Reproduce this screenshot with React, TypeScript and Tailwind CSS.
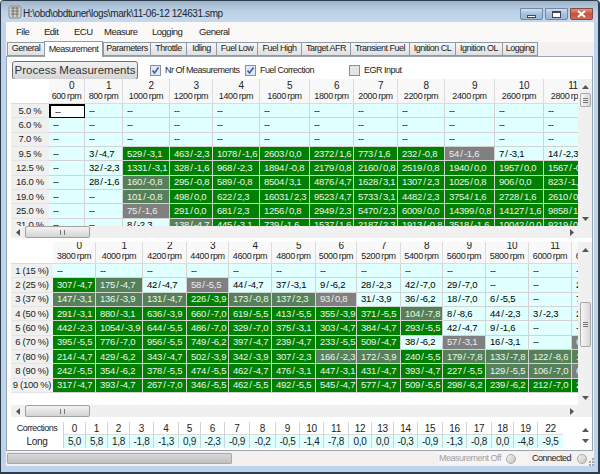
import React from "react";

const font = "font-['Liberation_Sans',Arial,sans-serif]";
const small = "text-[9px] tracking-[-0.5px]";
const cellText = "text-[9.5px] tracking-[-0.3px] [word-spacing:-1px]";

const tabs: [string, number][] = [
  ["General", 37],
  ["Measurement", 59],
  ["Parameters", 47],
  ["Throttle", 36],
  ["Idling", 30],
  ["Fuel Low", 41],
  ["Fuel High", 44],
  ["Target AFR", 49],
  ["Transient Fuel", 59],
  ["Ignition CL", 46],
  ["Ignition OL", 47],
  ["Logging", 36],
];

const topRpm = [600, 800, 1000, 1200, 1400, 1600, 1800, 2000, 2200, 2400, 2600, 2800];
const bottomRpm = [3800, 4000, 4200, 4400, 4600, 4800, 5000, 5200, 5400, 5600, 5800, 6000, 6200];

// kinds: l = light, d = dark green, m = grey green, g = grey
type Row = { label: string; kinds: string; cells: string[] };

const dash = (n: number) => Array(n).fill("--");

const topRows: Row[] = [
  { label: "5.0 %", kinds: "llllllllllll", cells: dash(12) },
  { label: "6.0 %", kinds: "llllllllllll", cells: dash(12) },
  { label: "7.0 %", kinds: "llllllllllll", cells: dash(12) },
  { label: "9.5 %", kinds: "lldddddddgll", cells: ["--", "3 / -4,7", "529 / -3,1", "463 / -2,3", "1078 / -1,6", "2603 / 0,0", "2372 / 1,6", "773 / 1,6", "232 / -0,8", "54 / -1,6", "7 / -3,1", "14 / -2,3"] },
  { label: "12.5 %", kinds: "lldddddddddd", cells: ["--", "32 / -2,3", "1331 / -3,1", "328 / -1,6", "968 / -2,3", "1894 / -0,8", "2179 / 0,8", "2160 / 0,8", "2519 / 0,8", "1940 / 0,0", "1957 / 0,0", "1567 / -0,8"] },
  { label: "16.0 %", kinds: "llmddddddddd", cells: ["--", "28 / -1,6", "160 / -0,8", "295 / -0,8", "589 / -0,8", "8504 / 3,1", "4876 / 4,7", "1628 / 3,1", "1307 / 2,3", "1025 / 0,8", "906 / 0,0", "823 / -1,6"] },
  { label: "19.0 %", kinds: "llmddddddddd", cells: ["--", "--", "101 / -0,8", "498 / 0,0", "622 / 2,3", "16031 / 2,3", "9523 / 4,7", "5733 / 3,1", "4482 / 2,3", "3754 / 1,6", "2728 / 1,6", "2610 / 0,8"] },
  { label: "25.0 %", kinds: "llgddddddddd", cells: ["--", "--", "75 / -1,6", "291 / 0,0", "681 / 2,3", "1256 / 0,8", "2949 / 2,3", "5470 / 2,3", "6009 / 0,0", "14399 / 0,8", "14127 / 1,6", "9858 / 1,6"] },
  { label: "31.0 %", kinds: "lllmdddddddd", cells: ["--", "--", "8 / -2,3", "138 / -4,7", "445 / -3,1", "739 / -1,6", "1537 / 1,6", "2187 / 2,3", "1913 / -0,8", "3518 / -1,6", "10042 / 0,0", "9219 / 0,0"] },
];

const bottomRows: Row[] = [
  { label: "1 (15 %)", kinds: "lllllllllllll", cells: dash(13) },
  { label: "2 (25 %)", kinds: "dmlglllllllll", cells: ["307 / -4,7", "175 / -4,7", "42 / -4,7", "58 / -5,5", "44 / -4,7", "37 / -3,1", "9 / -6,2", "28 / -2,3", "42 / -7,0", "29 / -7,0", "--", "--", "2"] },
  { label: "3 (37 %)", kinds: "mmmdmmgllllll", cells: ["147 / -3,1", "136 / -3,9", "131 / -4,7", "226 / -3,9", "173 / -0,8", "137 / 2,3", "93 / 0,8", "31 / -3,9", "36 / -6,2", "18 / -7,0", "6 / -5,5", "--", "7"] },
  { label: "4 (50 %)", kinds: "ddddddddmllll", cells: ["291 / -3,1", "880 / -3,1", "636 / -3,9", "660 / -7,0", "619 / -5,5", "413 / -5,5", "355 / -3,9", "371 / -5,5", "104 / -7,8", "8 / -8,6", "44 / -2,3", "3 / -2,3", "2"] },
  { label: "5 (60 %)", kinds: "dddddddddllll", cells: ["442 / -2,3", "1054 / -3,9", "644 / -5,5", "486 / -7,0", "329 / -7,0", "375 / -3,1", "303 / -4,7", "384 / -4,7", "293 / -5,5", "42 / -4,7", "9 / -1,6", "--", "-"] },
  { label: "6 (70 %)", kinds: "ddddddddlgllg", cells: ["395 / -5,5", "776 / -7,0", "956 / -5,5", "749 / -6,2", "397 / -4,7", "239 / -4,7", "233 / -5,5", "509 / -4,7", "38 / -6,2", "57 / -3,1", "16 / -3,1", "--", "6"] },
  { label: "7 (80 %)", kinds: "ddddddmmdmmmm", cells: ["214 / -4,7", "429 / -6,2", "343 / -4,7", "502 / -3,9", "342 / -3,9", "307 / -2,3", "166 / -2,3", "172 / -3,9", "240 / -5,5", "179 / -7,8", "133 / -7,8", "122 / -8,6", "1"] },
  { label: "8 (90 %)", kinds: "ddddddddddmmg", cells: ["242 / -5,5", "354 / -6,2", "378 / -5,5", "474 / -5,5", "462 / -4,7", "476 / -3,1", "447 / -3,1", "431 / -4,7", "393 / -4,7", "227 / -5,5", "129 / -5,5", "106 / -7,0", "6"] },
  { label: "9 (100 %)", kinds: "ddddddddddddd", cells: ["317 / -4,7", "393 / -4,7", "267 / -7,0", "346 / -5,5", "462 / -5,5", "492 / -5,5", "545 / -4,7", "577 / -4,7", "509 / -5,5", "298 / -6,2", "239 / -6,2", "212 / -7,0", "2"] },
];

const corrections: [string, string, number][] = [
  ["0", "5,0", 22], ["1", "5,8", 22], ["2", "1,8", 22], ["3", "-1,8", 24], ["4", "-1,3", 25],
  ["5", "0,9", 22], ["6", "-2,3", 24], ["7", "-0,9", 25], ["8", "-0,2", 26], ["9", "-0,5", 24],
  ["10", "-1,4", 24], ["11", "-7,8", 25], ["12", "0,0", 23], ["13", "0,0", 22], ["14", "-0,3", 24],
  ["15", "-0,9", 25], ["16", "-1,3", 24], ["17", "-0,8", 25], ["18", "0,0", 22], ["19", "-4,8", 24], ["22", "-9,5", 26],
];

const cellStyle: Record<string, string> = {
  l: "bg-[#e0ffff] text-black",
  d: "bg-[#008000] text-[#eef6ee]",
  m: "bg-[#55805a] text-[#eef6ee]",
  g: "bg-[#808080] text-[#eeeeee]",
};

function Grid({ rows, rpm, columns }: { rows: Row[]; rpm: number[]; columns: string }) {
  return (
    <div className={`grid auto-rows-[14.33px] ${columns}`}>
      <div className="border-b border-[#dcdcdc] bg-white" />
      {rpm.map((r, i) => (
        <div key={r} className="flex flex-col items-center justify-end overflow-hidden whitespace-nowrap border-r border-b border-[#dcdcdc] bg-[#f8f8f8] text-[9px] leading-[11px] tracking-[-0.4px] text-[#222]">
          <span className="pl-[10px] text-[10px]">{i}</span>
          <span className="pb-[1px] [word-spacing:-0.5px]">{r} rpm</span>
        </div>
      ))}
      {rows.map((row, ri) => (
        <React.Fragment key={row.label}>
          <div className="flex items-center justify-center overflow-hidden whitespace-nowrap border-b border-[#e4e4e4] bg-[#f0f0f0] text-[9.5px] tracking-[-0.3px] text-[#222]">{row.label}</div>
          {row.cells.map((c, ci) => (
            <div
              key={ci}
              className={`flex items-center overflow-hidden whitespace-nowrap border-r border-b border-[#d3d3d3] pl-[4px] ${cellText} ${cellStyle[row.kinds[ci]]} ${ri === 0 && ci === 0 && rpm[0] === 600 ? "border-2 border-black !bg-white" : ""}`}
            >
              {c}
            </div>
          ))}
        </React.Fragment>
      ))}
    </div>
  );
}

function Arrow({ dir }: { dir: "up" | "down" | "left" | "right" }) {
  const points = { up: "0,4 3.5,0 7,4", down: "0,0 3.5,4 7,0", left: "4,0 0,3.5 4,7", right: "0,0 4,3.5 0,7" }[dir];
  const box = dir === "up" || dir === "down" ? "0 0 7 4" : "0 0 4 7";
  const size = dir === "up" || dir === "down" ? "w-[7px] h-[4px]" : "w-[4px] h-[7px]";
  return (
    <svg viewBox={box} className={`${size} shrink-0`}>
      <polygon points={points} fill="#555" />
    </svg>
  );
}

function HScroll() {
  return (
    <div className="flex h-[12px] w-[567px] items-center bg-[#f0f0f0]">
      <div className="flex w-[14px] justify-center">
        <Arrow dir="left" />
      </div>
      <div className="flex h-[12px] w-[65px] items-center justify-center rounded-[2px] border border-[#a0a0a0] bg-linear-to-b from-[#f4f4f4] to-[#d4d4d4]">
        <span className="ml-[10px] h-[5px] w-[5px] border-x border-[#777]" />
      </div>
      <div className="flex flex-1 justify-end pr-[4px]">
        <Arrow dir="right" />
      </div>
    </div>
  );
}

function VScroll({ thumbTop, thumbHeight, bottomGap }: { thumbTop: string; thumbHeight: string; bottomGap: string }) {
  return (
    <div className="flex w-[14px] flex-col items-center bg-[#f0f0f0] pt-[6px]">
      <Arrow dir="up" />
      <div className={thumbTop} />
      <div className={`flex w-[11px] shrink-0 flex-col items-center justify-center gap-[1px] rounded-[2px] border border-[#a8a8a8] bg-linear-to-r from-[#f6f6f6] to-[#d8d8d8] ${thumbHeight}`}>
        <span className="h-[1px] w-[5px] bg-[#777]" />
        <span className="h-[1px] w-[5px] bg-[#777]" />
        <span className="h-[1px] w-[5px] bg-[#777]" />
      </div>
      <div className="flex-1" />
      <Arrow dir="down" />
      <div className={bottomGap} />
    </div>
  );
}

function Check({ checked, label, width }: { checked: boolean; label: string; width: string }) {
  return (
    <div className={`flex items-center gap-[4px] ${width}`}>
      <span className={`flex h-[11px] w-[11px] shrink-0 items-center justify-center border border-[#8e8f8f] ${checked ? "bg-[#dfe8f6]" : "bg-[#e4e4e4]"}`}>
        {checked && (
          <svg viewBox="0 0 9 9" className="h-[9px] w-[9px]">
            <path d="M1.5 4.5 L3.5 7 L7.5 1.5" fill="none" stroke="#3c62a8" strokeWidth="1.6" />
          </svg>
        )}
      </span>
      <span className={`whitespace-nowrap text-[#222] ${small}`}>{label}</span>
    </div>
  );
}

function Radio() {
  return <span className="h-[10px] w-[10px] shrink-0 rounded-full border border-[#a8a8a8] bg-linear-to-br from-[#f4f4f4] to-[#c4c4c4]" />;
}

function WinButton({ kind }: { kind: "min" | "max" | "close" }) {
  const bg =
    kind === "close"
      ? "from-[#dc9484] via-[#c8503c] to-[#d06a58] border-[#8a4a44]"
      : "from-[#cfdeec] via-[#a8c0da] to-[#9cb8d6] border-[#6f8aa6]";
  return (
    <div className={`flex h-[12px] w-[23px] items-center justify-center rounded-b-[2px] border bg-linear-to-b ${bg}`}>
      {kind === "min" && <span className="mt-[4px] h-[3px] w-[9px] border border-[#445] bg-white" />}
      {kind === "max" && <span className="h-[7px] w-[9px] border-x border-b-1 border-t-2 border-[#445] bg-white" />}
      {kind === "close" && (
        <svg viewBox="0 0 9 8" className="h-[8px] w-[9px]">
          <path d="M1 1 L8 7 M8 1 L1 7" stroke="white" strokeWidth="2" />
        </svg>
      )}
    </div>
  );
}

export default function App() {
  return (
    <div className={`${font} flex h-[474px] w-[600px] flex-col overflow-hidden rounded-t-[4px] border-l border-t border-r-2 border-b-2 border-[#2f3c4a] bg-[#bcd4ee] text-[#222]`}>
      {/* title bar */}
      <div className="flex h-[21px] shrink-0 items-center bg-linear-to-b from-[#9db4ca] via-[#bcd1e6] to-[#c4d9ee] pl-[7px] pr-[5px]">
        <svg viewBox="0 0 14 14" className="h-[14px] w-[14px] shrink-0">
          <rect x="1" y="1" width="12" height="12" rx="2" fill="#d0d0c8" stroke="#8a8a8a" />
          <path d="M3 3 H11 M3 6 H11 M3 9 H11 M5 2 V12 M9 2 V12" stroke="#707070" />
        </svg>
        <span className="ml-[1px] mt-[3px] whitespace-nowrap text-[10px] tracking-[-0.4px] text-[#1c2530]">H:\obd\obdtuner\logs\mark\11-06-12 124631.smp</span>
        <div className="ml-auto flex gap-[2px] self-start">
          <div className="mt-[7px] flex gap-[2px]">
            <WinButton kind="min" />
            <WinButton kind="max" />
            <WinButton kind="close" />
          </div>
        </div>
      </div>

      {/* client */}
      <div className="ml-[5px] mr-[4px] flex h-[444px] flex-col bg-[#f5f0f0]">
        <div className="flex h-[20px] shrink-0 items-center bg-[#fbf8f8] pl-[10px] text-[9.5px] tracking-[-0.5px]">
          <span className="w-[28px]">File</span>
          <span className="w-[30px]">Edit</span>
          <span className="w-[30px]">ECU</span>
          <span className="w-[48px]">Measure</span>
          <span className="w-[47px]">Logging</span>
          <span>General</span>
        </div>

        <div className="relative z-10 flex h-[14px] shrink-0 items-end pl-[1px]">
          {tabs.map(([name, w]) => {
            const active = name === "Measurement";
            return (
              <div
                key={name}
                style={{ width: w }}
                className={`flex items-center justify-center whitespace-nowrap border border-[#8e9aa6] text-[#222] ${small} ${active ? "-mb-[1px] h-[16px] border-b-0 bg-white" : "h-[14px] border-r-0 bg-linear-to-b from-[#f6f6f6] to-[#e0e0e0] last:border-r"}`}
              >
                {name}
              </div>
            );
          })}
        </div>

        <div className="flex h-[395px] w-[587px] flex-col border border-[#9aa5b0] bg-white pl-[4px]">
          <div className="flex h-[22px] shrink-0 items-start pt-[4px]">
            <button className="ml-[1px] flex h-[19px] w-[126px] shrink-0 items-center justify-center whitespace-nowrap rounded-[3px] border border-[#707070] bg-linear-to-b from-[#f2f2f2] to-[#d4d4d4] text-[11.5px] text-[#333]">
              Process Measurements
            </button>
            <div className="ml-[12px] mt-[3px] flex">
              <Check checked label="Nr Of Measurements" width="w-[95px]" />
              <Check checked label="Fuel Correction" width="w-[104px]" />
              <Check checked={false} label="EGR Input" width="w-[70px]" />
            </div>
          </div>

          {/* upper grid */}
          <div className="flex h-[159px] shrink-0">
            <div className="w-[567px]">
              <div className="h-[147px] overflow-hidden">
                <Grid rows={topRows} rpm={topRpm} columns="grid-rows-[25px] grid-cols-[38px_36px_38px_47px_43px_47px_50px_44px_44px_47px_50px_49px_49px]" />
              </div>
              <HScroll />
            </div>
            <VScroll thumbTop="h-[4px]" thumbHeight="h-[14px]" bottomGap="h-[17px]" />
          </div>

          {/* lower grid */}
          <div className="mt-[4px] flex h-[175px] shrink-0">
            <div className="w-[567px]">
              <div className="h-[163px] overflow-hidden">
                <Grid rows={bottomRows} rpm={bottomRpm} columns="grid-rows-[22px] grid-cols-[42px_43px_47px_44px_42px_43px_44px_41px_44px_42px_43px_43px_43px_43px]" />
              </div>
              <HScroll />
            </div>
            <VScroll thumbTop="h-[50px]" thumbHeight="h-[45px]" bottomGap="h-[17px]" />
          </div>

          {/* corrections */}
          <div className="mt-[5px] flex h-[26px] w-[581px] shrink-0 text-[10px] tracking-[-0.3px]">
            <div className="flex w-[52px] shrink-0 flex-col text-center">
              <span className={`h-[13px] leading-[13px] ${small}`}>Corrections</span>
              <span className="h-[13px] leading-[13px]">Long</span>
            </div>
            {corrections.map(([k, v, w]) => (
              <div key={k} style={{ width: w }} className="flex shrink-0 flex-col border-l border-[#d3d3d3] text-center">
                <span className="h-[13px] border-b border-[#dcdcdc] leading-[13px]">{k}</span>
                <span className="h-[13px] bg-[#e0ffff] leading-[13px]">{v}</span>
              </div>
            ))}
            <div className="ml-auto flex w-[13px] flex-col items-center justify-around py-[2px]">
              <Arrow dir="up" />
              <Arrow dir="down" />
            </div>
          </div>
        </div>

        {/* status bar */}
        <div className={`flex flex-1 items-center pl-[1px] ${small}`}>
          <div className="h-[11px] w-[225px] rounded-[1px] border border-[#a8a8a8] bg-linear-to-b from-[#d8d8d8] to-[#c0c0c0]" />
          <div className="ml-auto flex h-[13px] w-[90px] items-center justify-end gap-[5px] bg-[#f8f4f4] pr-[12px] text-[#a0a0a0]">
            <span className="whitespace-nowrap">Measurement Off</span>
            <Radio />
          </div>
          <div className="ml-[4px] flex items-center gap-[6px] text-[#222]">
            <span>Connected</span>
            <Radio />
          </div>
          <svg viewBox="0 0 6 8" className="ml-[1px] h-[8px] w-[6px] shrink-0 self-end">
            <path d="M4 0h2v2H4z M1 3h2v2H1z M4 3h2v2H4z M1 6h2v2H1z M4 6h2v2H4z" fill="#a8a8a8" />
          </svg>
        </div>
      </div>
    </div>
  );
}
